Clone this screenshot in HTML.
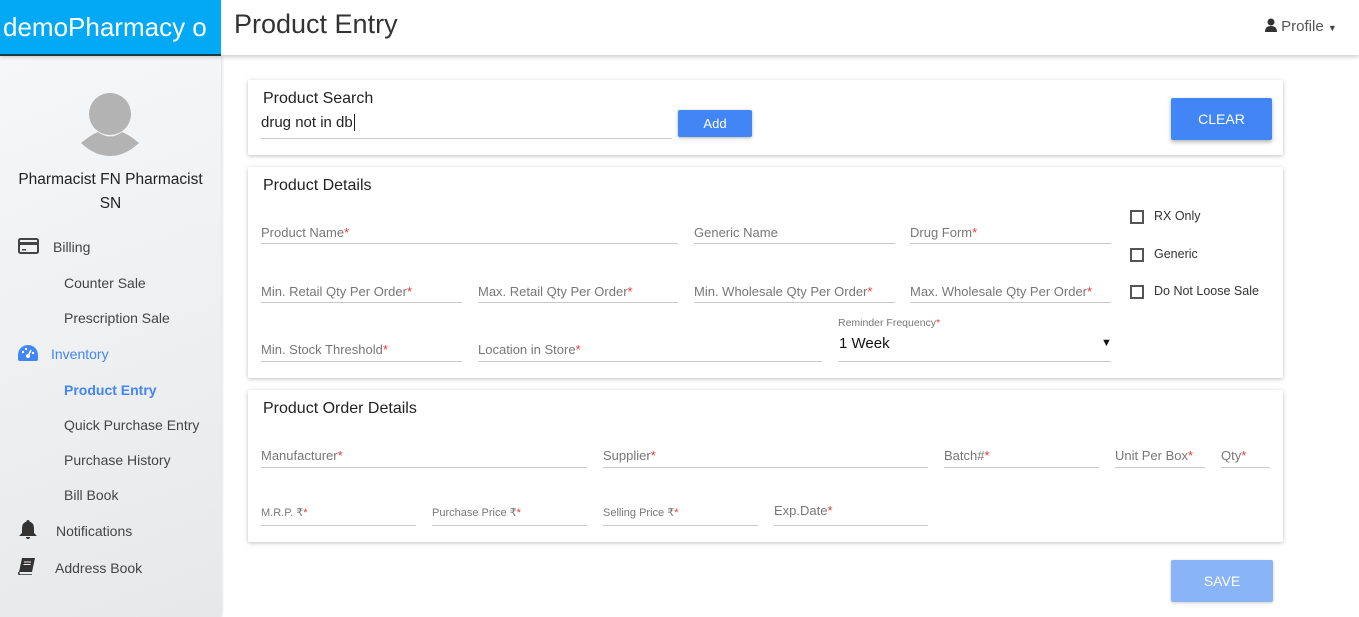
<!DOCTYPE html>
<html><head><meta charset="utf-8"><style>
*{box-sizing:border-box;margin:0;padding:0}
body{width:1359px;height:617px;overflow:hidden;background:#fff;font-family:"Liberation Sans",sans-serif;position:relative}
.a{position:absolute}
.hdr{left:0;top:0;width:1359px;height:55px;background:#fff;box-shadow:0 2px 4px rgba(0,0,0,.2);z-index:2}
.logo{left:0;top:0;width:221px;height:56px;background:#03a9f4;border-bottom:2px solid #1a3a4a;color:#fff;font-size:26px;line-height:54px;padding-left:3px;white-space:nowrap;overflow:hidden;z-index:3}
.side{left:0;top:56px;width:221px;height:561px;background:linear-gradient(160deg,#f6f7f9,#eceef0 60%,#e6e8ea);box-shadow:1px 0 3px rgba(0,0,0,.15)}
.card{background:#fff;box-shadow:0 1px 4px rgba(0,0,0,.25);border-radius:2px}
.lbl{font-size:13px;color:#777;line-height:16px;white-space:nowrap}
.lbl b{color:#e53935;font-weight:normal}
.ln{height:1px;background:#c8c8c8}
.ttl{font-size:16px;color:#222}
.nav{font-size:14px;color:#444;white-space:nowrap}
.cb{width:14px;height:14px;border:2px solid #555}
.ck{font-size:12.5px;color:#333}
</style></head><body>
<div class="a hdr"></div>
<div class="a logo">demoPharmacy o</div>
<div class="a" style="left:234px;top:9px;font-size:27px;color:#333;z-index:3">Product Entry</div>
<div class="a" style="left:1265px;top:18px;z-index:3;font-size:15px;color:#555;white-space:nowrap">
<svg width="12" height="14" viewBox="0 0 12 14" style="vertical-align:-1px"><circle cx="6" cy="4" r="3.5" fill="#333"/><path d="M0 14 Q0 8 6 8 Q12 8 12 14Z" fill="#333"/></svg> Profile <span style="font-size:9px;color:#444">▼</span></div>
<div class="a side"></div>
<svg class="a" style="left:80px;top:93px" width="60" height="64" viewBox="0 0 60 64"><circle cx="30" cy="21" r="21" fill="#b3b3b3"/><path d="M1 50 Q12 41 18 39 Q30 48 42 39 Q48 41 59 50 Q45 63 30 63 Q15 63 1 50Z" fill="#b3b3b3"/></svg>
<div class="a" style="left:0;top:168px;width:221px;text-align:center;font-size:15.5px;color:#222;line-height:24px">Pharmacist FN Pharmacist<br>SN</div>
<svg class="a" style="left:18px;top:238px" width="21" height="16" viewBox="0 0 21 16"><rect x="1" y="1" width="19" height="14" rx="1.5" fill="none" stroke="#444" stroke-width="2"/><rect x="1" y="4" width="19" height="3" fill="#444"/><rect x="4" y="11" width="4" height="1.5" fill="#444"/></svg>
<div class="a nav" style="left:53px;top:239px">Billing</div>
<div class="a nav" style="left:64px;top:275px">Counter Sale</div>
<div class="a nav" style="left:64px;top:310px">Prescription Sale</div>
<svg class="a" style="left:18px;top:345px" width="20" height="16" viewBox="0 0 20 16"><path d="M10 0A10 10 0 0 0 0 10v4q0 2 2 2h16q2 0 2-2v-4A10 10 0 0 0 10 0Z" fill="#4285f4"/><circle cx="10" cy="11" r="2" fill="#fff"/><path d="M10 11 L13 5" stroke="#fff" stroke-width="1.6"/><circle cx="5" cy="7" r="1.2" fill="#fff"/><circle cx="8" cy="4" r="1.2" fill="#fff"/><circle cx="15" cy="8" r="1.2" fill="#fff"/></svg>
<div class="a nav" style="left:51px;top:346px;color:#4285f4">Inventory</div>
<div class="a nav" style="left:64px;top:382px;color:#4285f4;font-weight:bold">Product Entry</div>
<div class="a nav" style="left:64px;top:417px">Quick Purchase Entry</div>
<div class="a nav" style="left:64px;top:452px">Purchase History</div>
<div class="a nav" style="left:64px;top:487px">Bill Book</div>
<svg class="a" style="left:19px;top:520px" width="18" height="19" viewBox="0 0 18 19"><path d="M9 0a1.5 1.5 0 0 1 1.5 1.5 Q15 3 15 8v5l3 3H0l3-3V8q0-5 4.5-6.5A1.5 1.5 0 0 1 9 0Z" fill="#333"/><path d="M7 17h4a2 2 0 0 1-4 0Z" fill="#333"/></svg>
<div class="a nav" style="left:56px;top:523px">Notifications</div>
<svg class="a" style="left:18px;top:558px" width="17" height="17" viewBox="0 0 17 17"><path d="M4 0h13l-3 14H1Z" fill="#333"/><path d="M1 14 Q0 17 3 17h11" fill="none" stroke="#333" stroke-width="1.5"/><path d="M6 4h7M5.5 6.5h7" stroke="#eee" stroke-width="1"/></svg>
<div class="a nav" style="left:55px;top:560px">Address Book</div>

<div class="a card" style="left:248px;top:80px;width:1035px;height:75px"></div>
<div class="a ttl" style="left:263px;top:90px">Product Search</div>
<div class="a" style="left:261px;top:114px;font-size:15px;color:#222">drug not in db<span style="border-left:1px solid #222;margin-left:1px"></span></div>
<div class="a ln" style="left:261px;top:138px;width:411px"></div>
<div class="a" style="left:678px;top:110px;width:74px;height:27px;background:#4285f4;color:#fff;font-size:13px;text-align:center;line-height:27px;border-radius:2px;box-shadow:0 1px 3px rgba(0,0,0,.3)">Add</div>
<div class="a" style="left:1171px;top:98px;width:101px;height:42px;background:#4285f4;color:#fff;font-size:14px;text-align:center;line-height:42px;border-radius:2px;box-shadow:0 2px 4px rgba(0,0,0,.3)">CLEAR</div>

<div class="a card" style="left:248px;top:167px;width:1035px;height:211px"></div>
<div class="a ttl" style="left:263px;top:177px">Product Details</div>
<div class="a lbl" style="left:261px;top:225px">Product Name<b>*</b></div><div class="a ln" style="left:261px;top:243px;width:417px"></div>
<div class="a lbl" style="left:694px;top:225px">Generic Name</div><div class="a ln" style="left:694px;top:243px;width:201px"></div>
<div class="a lbl" style="left:910px;top:225px">Drug Form<b>*</b></div><div class="a ln" style="left:910px;top:243px;width:201px"></div>
<div class="a lbl" style="left:261px;top:284px">Min. Retail Qty Per Order<b>*</b></div><div class="a ln" style="left:261px;top:302px;width:201px"></div>
<div class="a lbl" style="left:478px;top:284px">Max. Retail Qty Per Order<b>*</b></div><div class="a ln" style="left:478px;top:302px;width:200px"></div>
<div class="a lbl" style="left:694px;top:284px">Min. Wholesale Qty Per Order<b>*</b></div><div class="a ln" style="left:694px;top:302px;width:201px"></div>
<div class="a lbl" style="left:910px;top:284px">Max. Wholesale Qty Per Order<b>*</b></div><div class="a ln" style="left:910px;top:302px;width:201px"></div>
<div class="a lbl" style="left:261px;top:342px">Min. Stock Threshold<b>*</b></div><div class="a ln" style="left:261px;top:361px;width:201px"></div>
<div class="a lbl" style="left:478px;top:342px">Location in Store<b>*</b></div><div class="a ln" style="left:478px;top:361px;width:344px"></div>
<div class="a lbl" style="left:838px;top:315px;font-size:10.5px">Reminder Frequency<b>*</b></div>
<div class="a" style="left:839px;top:335px;font-size:15px;color:#111">1 Week</div>
<div class="a" style="left:1101px;top:337px;font-size:11px;color:#111">▼</div>
<div class="a ln" style="left:838px;top:361px;width:273px"></div>
<div class="a cb" style="left:1130px;top:210px"></div><div class="a ck" style="left:1154px;top:209px">RX Only</div>
<div class="a cb" style="left:1130px;top:248px"></div><div class="a ck" style="left:1154px;top:247px">Generic</div>
<div class="a cb" style="left:1130px;top:285px"></div><div class="a ck" style="left:1154px;top:284px">Do Not Loose Sale</div>

<div class="a card" style="left:248px;top:390px;width:1035px;height:152px"></div>
<div class="a ttl" style="left:263px;top:400px">Product Order Details</div>
<div class="a lbl" style="left:261px;top:448px">Manufacturer<b>*</b></div><div class="a ln" style="left:261px;top:467px;width:326px"></div>
<div class="a lbl" style="left:603px;top:448px">Supplier<b>*</b></div><div class="a ln" style="left:603px;top:467px;width:325px"></div>
<div class="a lbl" style="left:944px;top:448px">Batch#<b>*</b></div><div class="a ln" style="left:944px;top:467px;width:155px"></div>
<div class="a lbl" style="left:1115px;top:448px">Unit Per Box<b>*</b></div><div class="a ln" style="left:1115px;top:467px;width:90px"></div>
<div class="a lbl" style="left:1221px;top:448px">Qty<b>*</b></div><div class="a ln" style="left:1221px;top:467px;width:49px"></div>
<div class="a lbl" style="left:261px;top:505px;font-size:11px">M.R.P. ₹<b>*</b></div><div class="a ln" style="left:261px;top:525px;width:155px"></div>
<div class="a lbl" style="left:432px;top:505px;font-size:11px">Purchase Price ₹<b>*</b></div><div class="a ln" style="left:432px;top:525px;width:155px"></div>
<div class="a lbl" style="left:603px;top:505px;font-size:11px">Selling Price ₹<b>*</b></div><div class="a ln" style="left:603px;top:525px;width:155px"></div>
<div class="a lbl" style="left:774px;top:503px">Exp.Date<b>*</b></div><div class="a ln" style="left:774px;top:525px;width:154px"></div>

<div class="a" style="left:1171px;top:560px;width:102px;height:42px;background:#8ab4f8;color:#fff;font-size:14px;text-align:center;line-height:42px;border-radius:2px;box-shadow:0 1px 3px rgba(0,0,0,.2)">SAVE</div>
</body></html>
